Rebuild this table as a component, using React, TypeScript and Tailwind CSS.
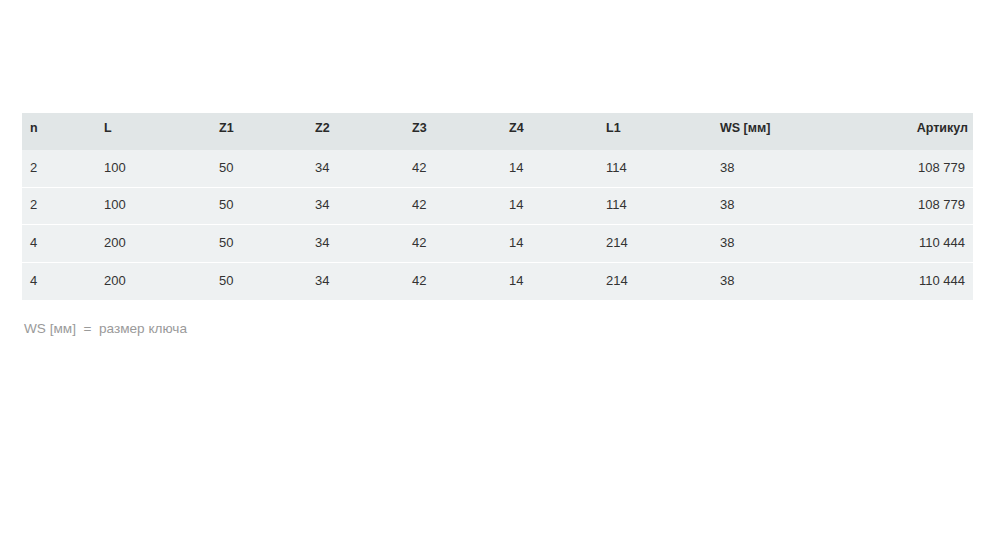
const headers = ['n', 'L', 'Z1', 'Z2', 'Z3', 'Z4', 'L1', 'WS [мм]', 'Артикул']

const rows = [
  ['2', '100', '50', '34', '42', '14', '114', '38', '108 779'],
  ['2', '100', '50', '34', '42', '14', '114', '38', '108 779'],
  ['4', '200', '50', '34', '42', '14', '214', '38', '110 444'],
  ['4', '200', '50', '34', '42', '14', '214', '38', '110 444'],
]

const grid = 'grid grid-cols-[74px_115px_96px_97px_97px_97px_114px_1fr_100px] items-center'

export default function App() {
  return (
    <div className="w-[1000px] h-[545px] bg-white font-['Liberation_Sans',Arial,sans-serif] text-[13px] text-[#333]">
      <div className="pt-[113px] pl-[22px] w-[973px]">
        <div className={`${grid} h-[37px] pb-[6px] bg-[#e1e6e7] font-bold text-[12.5px] text-[#2a2a2a]`}>
          {headers.map((h, i) => (
            <div key={h} className={i === 8 ? 'pr-[5px] text-right' : 'pl-[8px]'}>
              {h}
            </div>
          ))}
        </div>
        {rows.map((r, ri) => (
          <div
            key={ri}
            className={`${grid} pb-[2px] bg-[#eef1f2] ${ri > 0 ? 'border-t border-white' : ''} ${ri > 1 ? 'h-[38px]' : 'h-[37px]'}`}
          >
            {r.map((c, i) => (
              <div key={i} className={i === 8 ? 'pr-[8px] text-right' : 'pl-[8px]'}>
                {c}
              </div>
            ))}
          </div>
        ))}
        <p className="mt-[19px] pl-[2px] text-[13.6px] text-[#9a9a9a] whitespace-pre">WS [мм]  =  размер ключа</p>
      </div>
    </div>
  )
}
